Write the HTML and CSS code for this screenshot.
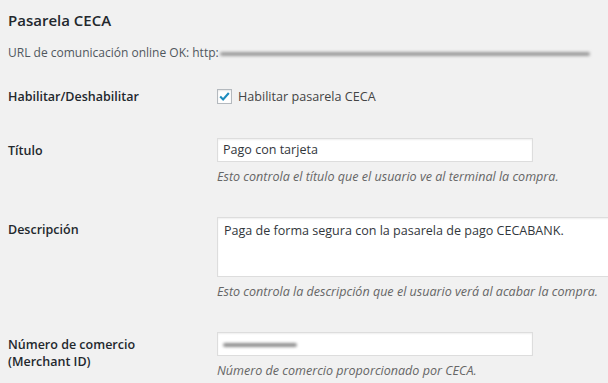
FILE: index.html
```html
<!DOCTYPE html>
<html lang="es">
<head>
    <meta charset="UTF-8">
    <meta name="viewport" content="width=device-width, initial-scale=1.0">
    <title>Pasarela CECA</title>
    <link rel="stylesheet" href="styles.css">
</head>
<body>
    <h2 class="section-title">Pasarela CECA</h2>
    <p class="notice">URL de comunicación online OK: http:<span class="blurred blurred-url"></span></p>

    <div class="settings">
        <div class="row">
            <div class="row-label">Habilitar/Deshabilitar</div>
            <div class="row-field">
                <label class="check">
                    <span class="check-box">
                        <svg width="15" height="15" viewBox="0 0 15 15"><path d="M3.2 7.6 L6.1 10.4 L11.8 4" fill="none" stroke="#1e8cbe" stroke-width="2.1"/></svg>
                    </span>
                    Habilitar pasarela CECA
                </label>
            </div>
        </div>

        <div class="row">
            <div class="row-label">Título</div>
            <div class="row-field">
                <div class="text-input">Pago con tarjeta</div>
                <p class="help">Esto controla el título que el usuario ve al terminal la compra.</p>
            </div>
        </div>

        <div class="row">
            <div class="row-label">Descripción</div>
            <div class="row-field">
                <div class="text-area">Paga de forma segura con la pasarela de pago CECABANK.</div>
                <p class="help">Esto controla la descripción que el usuario verá al acabar la compra.</p>
            </div>
        </div>

        <div class="row">
            <div class="row-label">Número de comercio<br>(Merchant ID)</div>
            <div class="row-field">
                <div class="text-input"><span class="blurred blurred-id"></span></div>
                <p class="help">Número de comercio proporcionado por CECA.</p>
            </div>
        </div>
    </div>
</body>
</html>
```

FILE: styles.css
```css
:root {
    --bg-color: #f1f1f1;
    --text-color: #444;
    --heading-color: #23282d;
    --help-color: #666;
    --input-border: #ddd;
    --check-color: #1e8cbe;
}

body {
    margin: 0;
    padding: 0 8px;
    background-color: var(--bg-color);
    color: var(--text-color);
    font-family: 'Open Sans', 'Noto Sans', sans-serif;
    font-size: 12.5px;
    overflow: hidden;
}

.section-title {
    margin: 0;
    padding-top: 8px;
    font-size: 15px;
    line-height: 24px;
    font-weight: 600;
    color: var(--heading-color);
}

.notice {
    margin: 11px 0 0;
    font-size: 12px;
    line-height: 20px;
    color: #50575e;
    white-space: nowrap;
}

.blurred {
    display: inline-block;
    vertical-align: middle;
    height: 4px;
    border-radius: 2px;
    background: #9c9c9c;
    filter: blur(1.4px);
}

.blurred-url {
    width: 370px;
    margin-left: 1px;
}

.blurred-id {
    width: 74px;
    background: #8e8e8e;
}

.settings {
    margin-top: 6px;
}

.row {
    display: flex;
    padding: 15px 0;
}

.row-label {
    flex: 0 0 209px;
    padding-top: 4px;
    font-weight: 600;
    line-height: 17px;
    color: var(--heading-color);
}

.row-field {
    flex: 1;
    min-width: 0;
}

.check {
    display: flex;
    align-items: center;
    gap: 6px;
    height: 24px;
    font-size: 12.6px;
}

.check-box {
    display: inline-block;
    width: 13px;
    height: 13px;
    border: 1px solid #b4b9be;
    background: #fff;
    box-shadow: inset 0 1px 2px rgba(0, 0, 0, 0.1);
}

.check-box svg {
    display: block;
    margin: -1px 0 0 -1px;
}

.text-input,
.text-area {
    box-sizing: border-box;
    background: #fff;
    border: 1px solid var(--input-border);
    box-shadow: inset 0 1px 2px rgba(0, 0, 0, 0.07);
    color: #32373c;
    font-size: 12.55px;
}

.text-input {
    width: 316px;
    height: 24px;
    padding: 0 5px;
    line-height: 22px;
}

.text-area {
    width: 400px;
    height: 60px;
    padding: 3px 6px;
    line-height: 19px;
}

.help {
    margin: 4px 0 0;
    font-size: 12.55px;
    line-height: 21px;
    font-style: italic;
    color: var(--help-color);
    white-space: nowrap;
}
```
